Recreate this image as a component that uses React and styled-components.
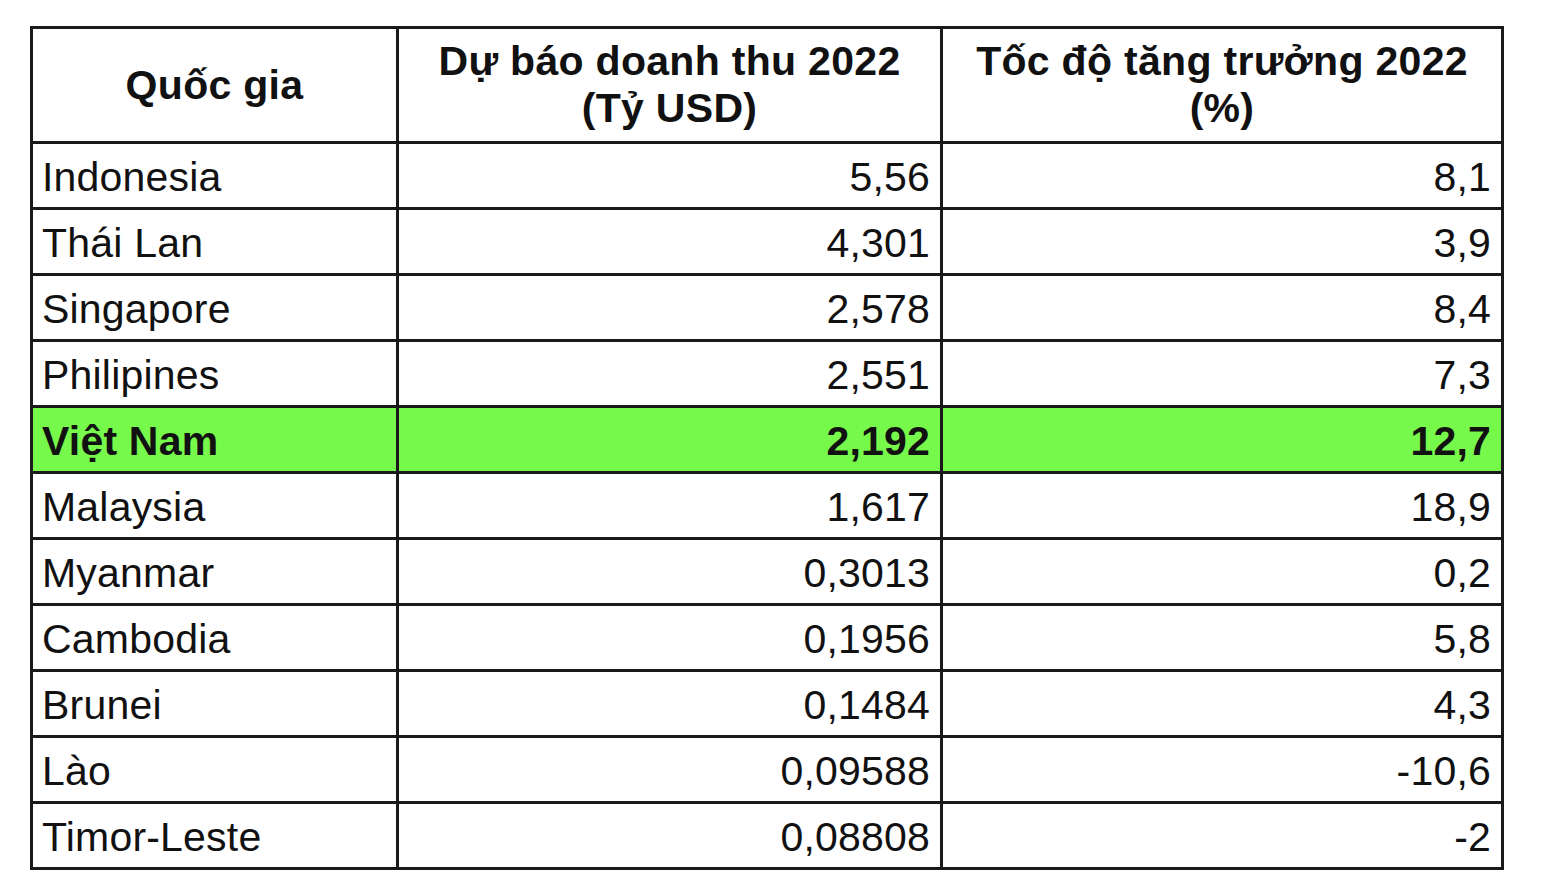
import React from "react";
import styled, { createGlobalStyle } from "styled-components";

const Global = createGlobalStyle`
  html, body { margin: 0; padding: 0; background: #ffffff; }
  body { font-family: "Liberation Sans", Arial, sans-serif; }
  *, *::before, *::after { box-sizing: border-box; }
`;

const Page = styled.div`
  padding: 26px 0 0 30px;
`;

const Table = styled.table`
  border-collapse: separate;
  border-spacing: 3px;
  background: #1a1a1a;
  table-layout: fixed;
  width: 1474px;
  color: #111111;
  font-family: "Liberation Sans", Arial, sans-serif;
  font-size: 41px;
`;

const Col = styled.col`
  width: ${(p) => p.$w}px;
`;

const HeadCell = styled.th`
  background: #ffffff;
  height: 112px;
  padding: 0 4px;
  font-weight: 700;
  text-align: center;
  vertical-align: middle;
  line-height: 47px;
  white-space: nowrap;
  letter-spacing: 0.3px;
`;

const Row = styled.tr`
  height: 63px;
`;

const Cell = styled.td`
  background: ${(p) => (p.$hl ? "#77f94b" : "#ffffff")};
  font-weight: ${(p) => (p.$hl ? 700 : 400)};
  text-align: ${(p) => (p.$num ? "right" : "left")};
  padding: ${(p) => (p.$num ? "4px 10px 0 0" : "4px 0 0 9px")};
  vertical-align: middle;
  line-height: 1;
  white-space: nowrap;
  letter-spacing: 0.2px;
`;

const rows = [
  ["Indonesia", "5,56", "8,1"],
  ["Thái Lan", "4,301", "3,9"],
  ["Singapore", "2,578", "8,4"],
  ["Philipines", "2,551", "7,3"],
  ["Việt Nam", "2,192", "12,7", true],
  ["Malaysia", "1,617", "18,9"],
  ["Myanmar", "0,3013", "0,2"],
  ["Cambodia", "0,1956", "5,8"],
  ["Brunei", "0,1484", "4,3"],
  ["Lào", "0,09588", "-10,6"],
  ["Timor-Leste", "0,08808", "-2"],
];

export default function App() {
  return (
    <>
      <Global />
      <Page>
        <Table>
          <colgroup>
            <Col $w={363} />
            <Col $w={541} />
            <Col $w={558} />
          </colgroup>
          <thead>
            <tr>
              <HeadCell>Quốc gia</HeadCell>
              <HeadCell>
                Dự báo doanh thu 2022
                <br />
                (Tỷ USD)
              </HeadCell>
              <HeadCell>
                Tốc độ tăng trưởng 2022
                <br />
                (%)
              </HeadCell>
            </tr>
          </thead>
          <tbody>
            {rows.map(([name, rev, growth, hl]) => (
              <Row key={name}>
                <Cell $hl={hl}>{name}</Cell>
                <Cell $hl={hl} $num>
                  {rev}
                </Cell>
                <Cell $hl={hl} $num>
                  {growth}
                </Cell>
              </Row>
            ))}
          </tbody>
        </Table>
      </Page>
    </>
  );
}
